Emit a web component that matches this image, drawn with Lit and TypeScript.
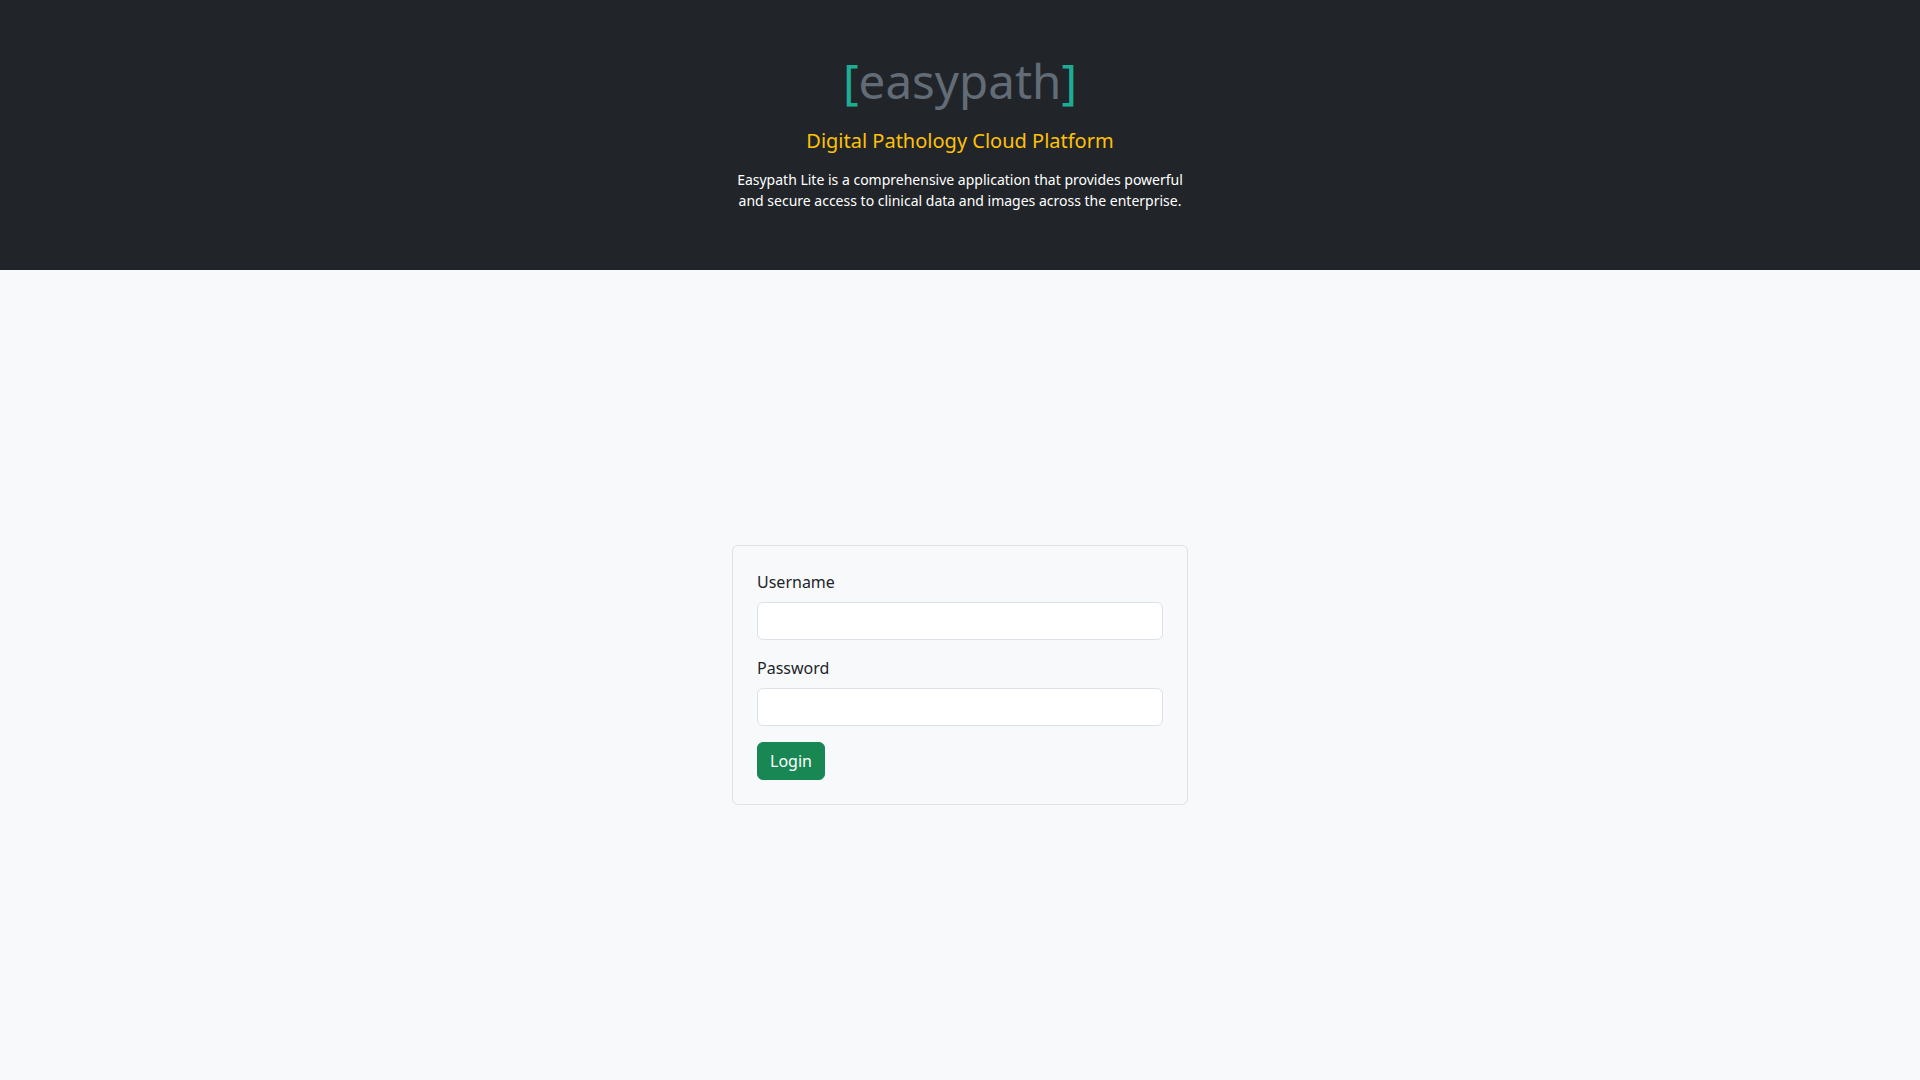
import { LitElement, html, css } from "lit";
import { customElement } from "lit/decorators.js";

@customElement("app-root")
export class AppRoot extends LitElement {
  static styles = css`
    :host {
      display: flex;
      flex-direction: column;
      min-height: 100vh;
      background: #f8f9fa;
      color: #212529;
      font-family: "Noto Sans", sans-serif;
      font-size: 16px;
      line-height: 1.5;
    }
    * { box-sizing: border-box; }
    header {
      height: 270px;
      flex: none;
      background: #212529;
      padding-top: 48px;
      text-align: center;
    }
    .logo {
      margin: 0 0 16px;
      font-size: 47.5px;
      font-weight: 400;
      line-height: 65px;
      color: #626c77;
    }
    .logo span { color: #1cad92; }
    .tag {
      margin: 0 0 16px;
      font-size: 20px;
      font-weight: 400;
      line-height: 1.2;
      color: #ffc107;
    }
    .desc {
      margin: 0;
      font-size: 14px;
      line-height: 21px;
      color: #fff;
    }
    main {
      flex: 1;
      display: flex;
      align-items: center;
      justify-content: center;
    }
    .card {
      width: 456px;
      padding: 24px;
      border: 1px solid #dee2e6;
      border-radius: 6px;
    }
    label { display: block; margin-bottom: 8px; }
    input {
      display: block;
      width: 100%;
      height: 38px;
      margin-bottom: 16px;
      padding: 6px 12px;
      font: inherit;
      background: #fff;
      border: 1px solid #dee2e6;
      border-radius: 6px;
    }
    button {
      display: block;
      height: 38px;
      padding: 6px 12px;
      font: inherit;
      color: #fff;
      background: #198754;
      border: 1px solid #198754;
      border-radius: 6px;
    }
  `;

  render() {
    return html`
      <header>
        <h1 class="logo"><span>[</span>easypath<span>]</span></h1>
        <h2 class="tag">Digital Pathology Cloud Platform</h2>
        <p class="desc">
          Easypath Lite is a comprehensive application that provides powerful<br />
          and secure access to clinical data and images across the enterprise.
        </p>
      </header>
      <main>
        <form class="card" @submit=${(e: Event) => e.preventDefault()}>
          <label for="username">Username</label>
          <input id="username" type="text" />
          <label for="password">Password</label>
          <input id="password" type="password" />
          <button type="submit">Login</button>
        </form>
      </main>
    `;
  }
}
